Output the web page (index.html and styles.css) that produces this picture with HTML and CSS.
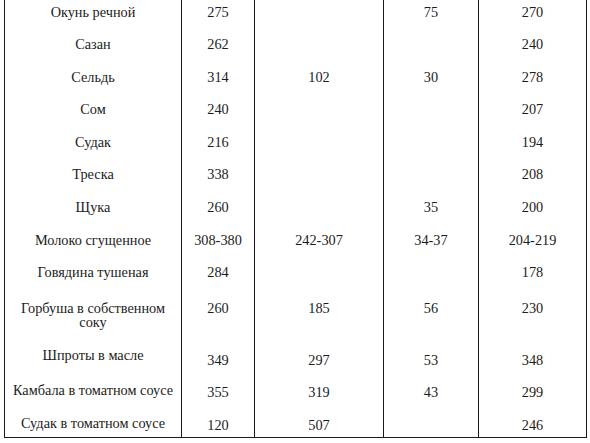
FILE: index.html
```html
<!DOCTYPE html>
<html lang="ru">
<head>
<meta charset="utf-8">
<title>Калорийность</title>
<link rel="stylesheet" href="styles.css">
</head>
<body>
<table class="tbl">
  <colgroup>
    <col class="c1"><col class="c2"><col class="c3"><col class="c4"><col class="c5">
  </colgroup>
  <tbody>
    <tr class="r0"><td>Окунь речной</td><td>275</td><td></td><td>75</td><td>270</td></tr>
    <tr class="rn"><td>Сазан</td><td>262</td><td></td><td></td><td>240</td></tr>
    <tr class="rn"><td>Сельдь</td><td>314</td><td>102</td><td>30</td><td>278</td></tr>
    <tr class="rn"><td>Сом</td><td>240</td><td></td><td></td><td>207</td></tr>
    <tr class="rn"><td>Судак</td><td>216</td><td></td><td></td><td>194</td></tr>
    <tr class="rn"><td>Треска</td><td>338</td><td></td><td></td><td>208</td></tr>
    <tr class="rn"><td>Щука</td><td>260</td><td></td><td>35</td><td>200</td></tr>
    <tr class="rn"><td>Молоко сгущенное</td><td>308-380</td><td>242-307</td><td>34-37</td><td>204-219</td></tr>
    <tr class="rn"><td>Говядина тушеная</td><td>284</td><td></td><td></td><td>178</td></tr>
    <tr class="r9"><td class="n">Горбуша в собственном соку</td><td>260</td><td>185</td><td>56</td><td>230</td></tr>
    <tr class="r10"><td class="n">Шпроты в масле</td><td>349</td><td>297</td><td>53</td><td>348</td></tr>
    <tr class="r11"><td class="n">Камбала в томатном соусе</td><td>355</td><td>319</td><td>43</td><td>299</td></tr>
    <tr class="r12"><td class="n">Судак в томатном соусе</td><td>120</td><td>507</td><td></td><td>246</td></tr>
  </tbody>
</table>
</body>
</html>
```
FILE: styles.css
```css
html, body {
  margin: 0;
  padding: 0;
  background: #ffffff;
}
body {
  padding-left: 4px;
}
.tbl {
  border-collapse: collapse;
  table-layout: fixed;
  width: 583px;
  font-family: "Liberation Serif", "Times New Roman", serif;
  font-size: 14.3px;
  line-height: 14px;
  color: #1c1c1c;
}
.c1 { width: 177px; }
.c2 { width: 73px; }
.c3 { width: 129px; }
.c4 { width: 95px; }
.c5 { width: 108px; }
.tbl td {
  border-left: 1px solid #1a1a1a;
  border-right: 1px solid #1a1a1a;
  text-align: center;
  vertical-align: top;
  padding: 9px 4px 9.6px;
}
.tbl tr:last-child td {
  border-bottom: 1px solid #1a1a1a;
}
.tbl .r0 td { padding-top: 5px; padding-bottom: 9px; }
.tbl .r9 td { padding-top: 12.2px; padding-bottom: 27px; }
.tbl .r9 td.n { padding-bottom: 13px; }
.tbl .r10 td { padding-top: 11px; padding-bottom: 7px; }
.tbl .r10 td.n { padding-top: 6px; padding-bottom: 12px; }
.tbl .r11 td { padding-top: 11px; padding-bottom: 7px; }
.tbl .r11 td.n { padding-top: 9px; padding-bottom: 9px; }
.tbl .r12 td { padding-top: 12px; padding-bottom: 5px; }
.tbl .r12 td.n { padding-top: 10px; padding-bottom: 7px; }
```
